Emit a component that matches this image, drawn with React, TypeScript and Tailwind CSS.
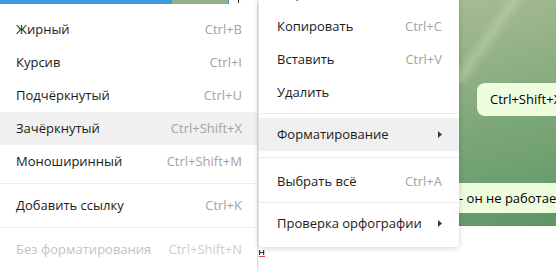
import React from 'react';

type Item = { label: string; shortcut?: string; active?: boolean; disabled?: boolean; submenu?: boolean };

const SubArrow = () => (
  <svg width="4" height="7" viewBox="0 0 4 7" className="shrink-0">
    <polygon points="0,0 4,3.5 0,7" fill="#3a3a3a" />
  </svg>
);

const MenuRow: React.FC<{ item: Item; padLeft: string; padRight: string }> = ({ item, padLeft, padRight }) => (
  <div
    className={`flex h-[33px] items-center justify-between ${padLeft} ${padRight} ${item.active ? 'bg-[#f0f0f0]' : ''}`}
  >
    <span className={item.disabled ? 'text-[#c3c3c3]' : 'text-[#1b1b1b]'}>{item.label}</span>
    {item.submenu ? (
      <SubArrow />
    ) : item.shortcut ? (
      <span className={item.disabled ? 'text-[#cdcdcd]' : 'text-[#a3a3a3]'}>{item.shortcut}</span>
    ) : null}
  </div>
);

const Sep: React.FC<{ className: string }> = ({ className }) => <div className={`h-px bg-[#ececec] ${className}`} />;

export default function App() {
  return (
    <div
      className="relative h-[271px] w-[556px] overflow-hidden bg-white text-[13px] leading-none"
      style={{ fontFamily: '"Open Sans", "Noto Sans", sans-serif' }}
    >
      {/* background: dialog list strip + chat */}
      <div className="flex h-full">
        <div className="w-[459px] shrink-0">
          <div className="flex h-[4px]">
            <div className="w-[172px] bg-[#3f9ade]" />
            <div className="w-[56px] bg-[#98ae88]" />
            <div className="w-px bg-[#4d8fd0]" />
            <div className="w-[9px]" />
            <div className="h-[3px] w-px bg-[#333]" />
          </div>
        </div>
        <div className="min-w-0 flex-1">
          <div className="h-[226px] bg-[linear-gradient(165deg,#a7bb93_0%,#94b287_25%,#7ba778_55%,#5f9565_100%)]">
            <div className="h-[83px] bg-[linear-gradient(125deg,transparent_28%,rgba(205,225,185,0.35)_36%,transparent_44%)]" />
            <div className="ml-[18px] flex h-[33px] w-[120px] items-center rounded-[8px] bg-[#effddf] pl-[13px] text-black">
              Ctrl+Shift+X
            </div>
            <div className="mt-[67px] -ml-[30px] flex h-[30px] w-[160px] items-center rounded-[8px] bg-[#effddf] pl-[30px] whitespace-nowrap text-black">
              - он не работает
            </div>
          </div>
        </div>
      </div>

      {/* formatting submenu */}
      <div className="absolute left-0 top-[4px] w-[258px] border-r border-[#dedede] bg-white pt-[9px] shadow-[1px_0_3px_rgba(0,0,0,0.06)]">
        <MenuRow item={{ label: 'Жирный', shortcut: 'Ctrl+B' }} padLeft="pl-[16px]" padRight="pr-[15px]" />
        <MenuRow item={{ label: 'Курсив', shortcut: 'Ctrl+I' }} padLeft="pl-[16px]" padRight="pr-[15px]" />
        <MenuRow item={{ label: 'Подчёркнутый', shortcut: 'Ctrl+U' }} padLeft="pl-[16px]" padRight="pr-[15px]" />
        <MenuRow item={{ label: 'Зачёркнутый', shortcut: 'Ctrl+Shift+X', active: true }} padLeft="pl-[16px]" padRight="pr-[15px]" />
        <MenuRow item={{ label: 'Моноширинный', shortcut: 'Ctrl+Shift+M' }} padLeft="pl-[16px]" padRight="pr-[15px]" />
        <Sep className="mt-[5px] mb-[5px]" />
        <MenuRow item={{ label: 'Добавить ссылку', shortcut: 'Ctrl+K' }} padLeft="pl-[16px]" padRight="pr-[15px]" />
        <Sep className="mt-[5px] mb-[5px]" />
        <MenuRow item={{ label: 'Без форматирования', shortcut: 'Ctrl+Shift+N', disabled: true }} padLeft="pl-[16px]" padRight="pr-[15px]" />
        <div className="h-[10px]" />
      </div>

      {/* main context menu */}
      <div className="absolute left-[259px] top-[-32px] w-[200px] rounded-b-[4px] bg-white pt-[9px] pb-[7px] shadow-[0_1px_6px_rgba(0,0,0,0.18)]">
        <MenuRow item={{ label: 'Вырезать', shortcut: 'Ctrl+X' }} padLeft="pl-[18px]" padRight="pr-[17px]" />
        <MenuRow item={{ label: 'Копировать', shortcut: 'Ctrl+C' }} padLeft="pl-[18px]" padRight="pr-[17px]" />
        <MenuRow item={{ label: 'Вставить', shortcut: 'Ctrl+V' }} padLeft="pl-[18px]" padRight="pr-[17px]" />
        <MenuRow item={{ label: 'Удалить' }} padLeft="pl-[18px]" padRight="pr-[17px]" />
        <Sep className="mt-[4px] mb-[4px]" />
        <MenuRow item={{ label: 'Форматирование', submenu: true, active: true }} padLeft="pl-[18px]" padRight="pr-[17px]" />
        <Sep className="mt-[6px] mb-[7px]" />
        <MenuRow item={{ label: 'Выбрать всё', shortcut: 'Ctrl+A' }} padLeft="pl-[18px]" padRight="pr-[17px]" />
        <Sep className="mt-[4px] mb-[4px]" />
        <MenuRow item={{ label: 'Проверка орфографии', submenu: true }} padLeft="pl-[18px]" padRight="pr-[17px]" />
      </div>

      {/* tiny text-cursor glyph under the menu */}
      <svg className="absolute left-[259px] top-[250px]" width="6" height="7" viewBox="0 0 6 7">
        <rect x="0" y="0" width="1.2" height="5" fill="#2a3550" />
        <rect x="4" y="0" width="1.2" height="5" fill="#2a3550" />
        <rect x="0" y="2" width="5" height="1" fill="#2a3550" />
        <rect x="0" y="6" width="6" height="1" fill="#e04848" />
      </svg>
    </div>
  );
}
